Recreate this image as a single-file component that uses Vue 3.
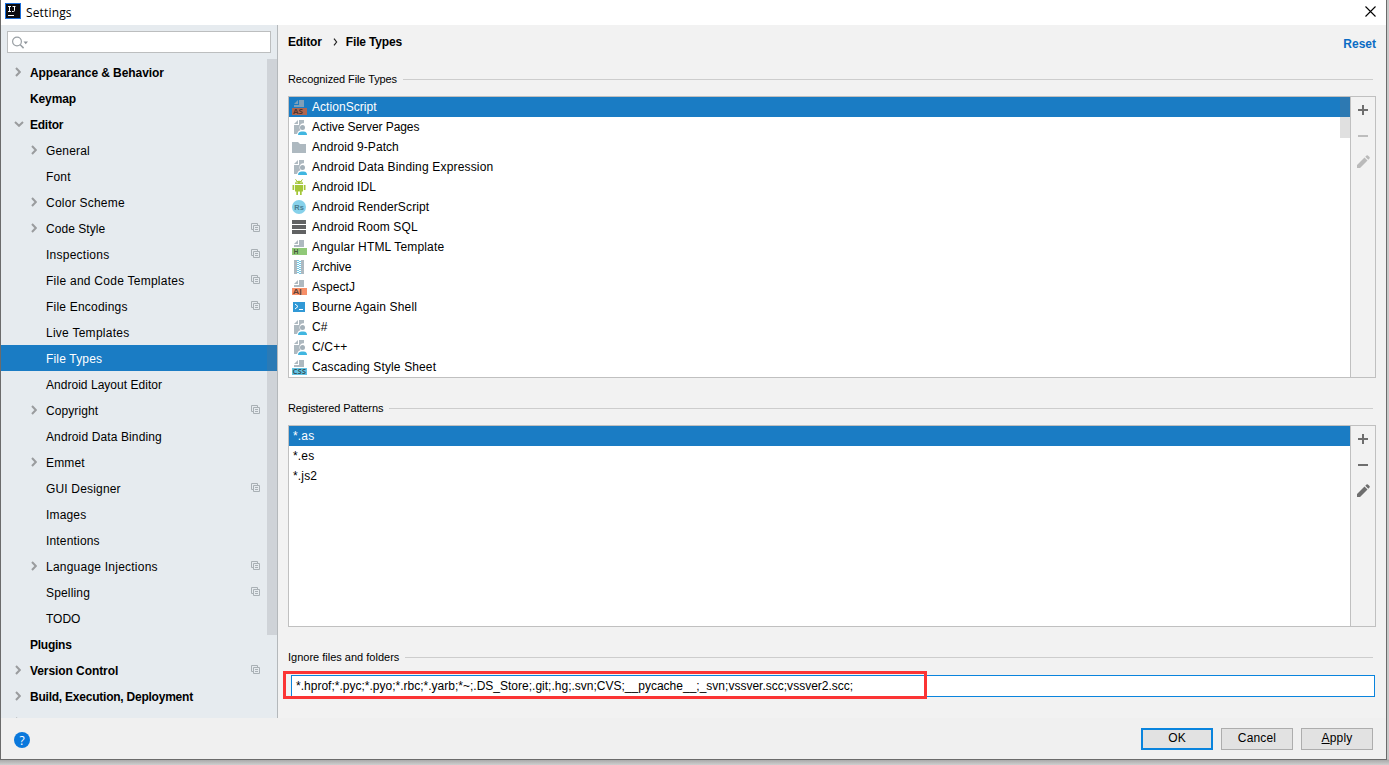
<template>
  <div class="screen">
    <div class="window">
      <header class="titlebar">
        <svg class="app-logo" width="16" height="16" viewBox="0 0 16 16">
          <rect width="16" height="16" fill="#1b6fdc" />
          <rect x="1" y="1" width="14" height="14" fill="#0c0c10" />
          <path d="M3 3.500h3M4.500 3.500v5M3 8.500h3M7.500 3.500h3M9.500 3.500v4q0 1-1 1h-1.500" fill="none" stroke="#fff" />
          <path d="M3 12.500h6" stroke="#fff" />
        </svg>
        <span class="window-title">Settings</span>
        <svg class="close" width="11" height="11" viewBox="0 0 11 11">
          <path d="M.5 .5l10 10M10.500 .5l-10 10" stroke="#000" stroke-width="1.100" />
        </svg>
      </header>

      <div class="body">
        <aside class="sidebar">
          <div class="search">
            <svg width="17" height="13" viewBox="0 0 17 13">
              <circle cx="5" cy="5.500" r="4.400" fill="none" stroke="#9aa0a5" stroke-width="1.200" />
              <path d="M8 8.500l3.600 3.600" stroke="#9aa0a5" stroke-width="1.500" />
              <path d="M11.500 5.500h4.500l-2.250 2.800z" fill="#8d9399" />
            </svg>
          </div>
          <div class="tree">
            <div
              v-for="node in tree"
              :key="node.label"
              class="node"
              :class="{ root: node.root, selected: node.selected }"
            >
              <span class="arrow">
                <svg v-if="node.arrow === 'right'" class="arrow-right" width="6" height="10" viewBox="0 0 6 10">
                  <path d="M1 1l3.800 4L1 9" fill="none" stroke="#9a9c9e" stroke-width="2" />
                </svg>
                <svg v-if="node.arrow === 'down'" width="10" height="6" viewBox="0 0 10 6">
                  <path d="M1 1l4 3.800L9 1" fill="none" stroke="#9a9c9e" stroke-width="2" />
                </svg>
              </span>
              <span class="node-label" :style="tracking(node)">{{ node.label }}</span>
              <svg v-if="node.project" class="project" width="9" height="9" viewBox="0 0 9 9">
                <path d="M2 6.500H.5v-6h6v1.500M2.500 2.500h6v6h-6zM4 4.500h3M4 6.500h3" fill="none" stroke="#a9b0b5" />
              </svg>
            </div>
            <div class="tree-thumb"></div>
          </div>
        </aside>

        <main class="content">
          <div class="crumbs">
            <span class="crumb">Editor</span>
            <svg width="5" height="8" viewBox="0 0 5 8">
              <path d="M1 .7L3.600 4 1 7.300" fill="none" stroke="#222" stroke-width="1.200" />
            </svg>
            <span class="crumb">File Types</span>
            <span class="reset">Reset</span>
          </div>

          <div class="group-title first"><span>Recognized File Types</span></div>
          <div class="panel types">
            <div class="list">
              <div
                v-for="(type, i) in types"
                :key="type.label"
                class="item"
                :class="{ selected: i === 0 }"
              >
                <svg class="type-icon" width="16" height="16" viewBox="0 0 16 16">
                  <g v-if="type.icon === 'badge'">
                    <path d="M7 1v4H3z" :fill="type.doc || '#aeb9c0'" />
                    <path d="M8 1h5v7H3V6h5z" :fill="type.doc || '#aeb9c0'" />
                    <rect x="1" y="9" width="15" height="7" :fill="type.color" />
                    <text
                      :x="type.x"
                      y="15"
                      :textLength="type.w"
                      lengthAdjust="spacingAndGlyphs"
                      class="badge-text"
                    >{{ type.badge }}</text>
                  </g>
                  <g v-else-if="type.icon === 'custom'">
                    <path d="M7 1v4H3z" fill="#aeb9c0" />
                    <path d="M8 1h5v3.200a4 4 0 0 0-4.500 4.300q0 1.500 1 2.500Q6.500 12 6 15H3V6h5z" fill="#aeb9c0" />
                    <circle cx="11.500" cy="8.500" r="2.500" fill="#a3b0b9" />
                    <path d="M7 16c0-2.800 2-3.500 3.500-3.500h2c1.500 0 3.500 .7 3.500 3.500z" fill="#40b6e0" />
                  </g>
                  <path v-else-if="type.icon === 'folder'" d="M1 3h6l2 2h6v9H1z" fill="#aeb9c0" />
                  <g v-else-if="type.icon === 'android'" fill="#a4c639">
                    <path d="M4 5c0-2 1.500-3.200 4-3.200S12 3 12 5zM4 6h8v6.500H4zM1.500 6h1.700v5H1.500zM12.800 6h1.700v5h-1.700zM5.300 12h1.700v4H5.300zM9 12h1.700v4H9z" />
                    <path d="M4.500 .3l1.500 2M11.500 .3l-1.500 2" stroke="#a4c639" />
                    <path d="M5.500 3.200h1v1h-1zM9.500 3.200h1v1h-1z" fill="#fff" />
                  </g>
                  <g v-else-if="type.icon === 'rs'">
                    <circle cx="8" cy="8" r="7" fill="#86d1ea" />
                    <text x="3.300" y="11" textLength="9.500" lengthAdjust="spacingAndGlyphs" class="rs-text">Rs</text>
                  </g>
                  <path v-else-if="type.icon === 'sql'" d="M1 1h14v4H1zM1 6h14v4H1zM1 11h14v4H1z" fill="#616263" />
                  <g v-else-if="type.icon === 'archive'">
                    <path d="M3 1h3v14H3zM10 1h3v14h-3z" fill="#aeb9c0" />
                    <path d="M7 1v14M9 2v14" stroke="#40b6e0" stroke-width="2" stroke-dasharray="1 1" opacity=".75" />
                  </g>
                  <g v-else>
                    <rect x="2" y="3" width="12" height="10" fill="#3199d6" />
                    <path d="M4 5l3 2.500L4 10M8 10.500h4" fill="none" stroke="#fff" />
                  </g>
                </svg>
                <span :style="tracking(type)">{{ type.label }}</span>
              </div>
              <div class="list-thumb"></div>
            </div>
            <div class="tools">
              <svg width="16" height="16" viewBox="0 0 16 16"><path d="M8 3v10M3 8h10" stroke="#6e6e6e" stroke-width="2" /></svg>
              <svg width="16" height="16" viewBox="0 0 16 16"><path d="M3 8h10" stroke="#bdbdbd" stroke-width="2" /></svg>
              <svg width="16" height="16" viewBox="0 0 16 16"><path :d="pencil" fill="#bababa" /></svg>
            </div>
          </div>

          <div class="group-title second"><span>Registered Patterns</span></div>
          <div class="panel patterns">
            <div class="list">
              <div
                v-for="(pattern, i) in patterns"
                :key="pattern"
                class="item pattern"
                :class="{ selected: i === 0 }"
              >{{ pattern }}</div>
            </div>
            <div class="tools">
              <svg width="16" height="16" viewBox="0 0 16 16"><path d="M8 3v10M3 8h10" stroke="#6e6e6e" stroke-width="2" /></svg>
              <svg width="16" height="16" viewBox="0 0 16 16"><path d="M3 8h10" stroke="#6e6e6e" stroke-width="2" /></svg>
              <svg width="16" height="16" viewBox="0 0 16 16"><path :d="pencil" fill="#6e6e6e" /></svg>
            </div>
          </div>

          <div class="group-title third"><span>Ignore files and folders</span></div>
          <div class="ignore">
            <span>{{ ignored }}</span>
            <div class="highlight"></div>
          </div>
        </main>
      </div>

      <footer class="footer">
        <svg class="help" width="16" height="16" viewBox="0 0 16 16">
          <circle cx="8" cy="8" r="8" fill="#0a78dc" />
          <text x="8" y="12.500" text-anchor="middle" class="help-text">?</text>
        </svg>
        <button class="btn primary">OK</button>
        <button class="btn">Cancel</button>
        <button class="btn"><u>A</u>pply</button>
      </footer>
    </div>
  </div>
</template>

<script setup>
const tree = [
  { label: 'Appearance & Behavior', root: true, arrow: 'right', spacing: -0.07 },
  { label: 'Keymap', root: true },
  { label: 'Editor', root: true, arrow: 'down', spacing: -0.25 },
  { label: 'General', arrow: 'right' },
  { label: 'Font' },
  { label: 'Color Scheme', arrow: 'right', spacing: 0.24 },
  { label: 'Code Style', arrow: 'right', project: true, spacing: 0.05 },
  { label: 'Inspections', project: true, spacing: 0.25 },
  { label: 'File and Code Templates', project: true, spacing: 0.26 },
  { label: 'File Encodings', project: true, spacing: 0.21 },
  { label: 'Live Templates', spacing: 0.26 },
  { label: 'File Types', selected: true },
  { label: 'Android Layout Editor', spacing: 0.03 },
  { label: 'Copyright', arrow: 'right', project: true, spacing: 0.08 },
  { label: 'Android Data Binding', spacing: 0.12 },
  { label: 'Emmet', arrow: 'right' },
  { label: 'GUI Designer', project: true },
  { label: 'Images' },
  { label: 'Intentions' },
  { label: 'Language Injections', arrow: 'right', project: true, spacing: 0.23 },
  { label: 'Spelling', project: true },
  { label: 'TODO', spacing: 0 },
  { label: 'Plugins', root: true, spacing: -0.25 },
  { label: 'Version Control', root: true, arrow: 'right', project: true, spacing: -0.08 },
  { label: 'Build, Execution, Deployment', root: true, arrow: 'right', spacing: -0.23 },
  { label: '', root: true, arrow: 'right' }
]

const types = [
  { label: 'ActionScript', icon: 'badge', badge: 'AS', color: '#b0654f', doc: '#7f9fb8', x: 2, w: 10, spacing: 0.05 },
  { label: 'Active Server Pages', icon: 'custom', spacing: -0.07 },
  { label: 'Android 9-Patch', icon: 'folder', spacing: 0.05 },
  { label: 'Android Data Binding Expression', icon: 'custom' },
  { label: 'Android IDL', icon: 'android', spacing: 0.05 },
  { label: 'Android RenderScript', icon: 'rs', spacing: 0.13 },
  { label: 'Android Room SQL', icon: 'sql', spacing: 0.1 },
  { label: 'Angular HTML Template', icon: 'badge', badge: 'H', color: '#90c978', x: 2.5, w: 5 },
  { label: 'Archive', icon: 'archive', spacing: -0.1 },
  { label: 'AspectJ', icon: 'badge', badge: 'AJ', color: '#f78f68', x: 2, w: 9, spacing: 0.05 },
  { label: 'Bourne Again Shell', icon: 'shell' },
  { label: 'C#', icon: 'custom' },
  { label: 'C/C++', icon: 'custom' },
  { label: 'Cascading Style Sheet', icon: 'badge', badge: 'CSS', color: '#62c3e4', x: 1.5, w: 13.5, spacing: 0.13 }
]

const patterns = ['*.as', '*.es', '*.js2']

const ignored = '*.hprof;*.pyc;*.pyo;*.rbc;*.yarb;*~;.DS_Store;.git;.hg;.svn;CVS;__pycache__;_svn;vssver.scc;vssver2.scc;'

const pencil = 'M2 11l7.500-7.500 3 3L5 14H2zM10.300 2.700l1.200-1.200q.7-.7 1.400 0l1.600 1.600q.7 .7 0 1.400l-1.200 1.200z'

function tracking(entry) {
  return entry.spacing === undefined ? null : { letterSpacing: entry.spacing + 'px' }
}
</script>

<style>
body {
  margin: 0;
  overflow: hidden;
}
</style>

<style scoped>
.screen {
  box-sizing: border-box;
  width: 1389px;
  height: 765px;
  padding-right: 2px;
  background: linear-gradient(#c8c8c8 0, #c8c8c8 759px, #aaa 760px, #cfcfcf 765px);
  font-family: "Liberation Sans", Arial, sans-serif;
  font-size: 12px;
  letter-spacing: 0.17px;
  color: #000;
}

.window {
  box-sizing: border-box;
  height: 760px;
  display: flex;
  flex-direction: column;
  border: 1px solid #6b6b6b;
  border-top: none;
  background: #f2f2f2;
}

.titlebar {
  display: flex;
  align-items: center;
  height: 25px;
  flex-shrink: 0;
  padding: 0 10px 0 4px;
  background: #fff;
}

.app-logo {
  margin-bottom: 3px;
}

.window-title {
  flex: 1;
  margin: 0 0 1px 5px;
  font-family: "Open Sans", sans-serif;
  font-size: 12px;
  letter-spacing: 0.15px;
}

.close {
  margin-bottom: 3px;
}

.body {
  display: flex;
  height: 693px;
}

.sidebar {
  box-sizing: border-box;
  width: 277px;
  flex-shrink: 0;
  display: flex;
  flex-direction: column;
  padding-top: 6px;
  border-right: 1px solid #b4b8bb;
  background: #e6ebef;
}

.search {
  box-sizing: border-box;
  display: flex;
  align-items: center;
  width: 264px;
  height: 22px;
  flex-shrink: 0;
  margin-left: 6px;
  padding-left: 4px;
  border: 1px solid #bcbebf;
  background: #fff;
}

.tree {
  position: relative;
  flex: 1;
  margin-top: 6px;
  overflow: hidden;
}

.node {
  display: flex;
  align-items: center;
  height: 26px;
  padding: 0 17px 0 29px;
}

.node.root {
  padding-left: 13px;
  font-weight: bold;
  letter-spacing: -0.12px;
}

.node.selected {
  background: #1a7cc4;
  color: #fff;
}

.arrow {
  display: flex;
  justify-content: center;
  flex-shrink: 0;
  width: 10px;
  margin-right: 6px;
}

.arrow-right {
  margin-right: 3px;
}

.node-label {
  flex: 1;
  padding-top: 1px;
  white-space: nowrap;
}

.project {
  margin-bottom: 1px;
}

.tree-thumb {
  position: absolute;
  top: 0;
  right: 0;
  width: 10px;
  height: 576px;
  background: rgba(115, 115, 125, 0.2);
}

.content {
  flex: 1;
  display: flex;
  flex-direction: column;
  padding: 0 10px;
}

.crumbs {
  display: flex;
  align-items: center;
  height: 34px;
  font-weight: bold;
  letter-spacing: 0;
}

.crumb {
  letter-spacing: -0.15px;
}

.crumbs svg {
  margin: 0 8px 0 11px;
}

.reset {
  margin: 3px 0 0 auto;
  color: #0b6cc4;
}

.group-title {
  display: flex;
  align-items: center;
  height: 14px;
  margin-right: 3px;
  font-size: 11px;
  letter-spacing: -0.1px;
}

.group-title::after {
  content: "";
  flex: 1;
  height: 1px;
  margin-left: 6px;
  background: #cdcdcd;
}

.first {
  margin-top: 13px;
}

.second {
  margin-top: 23px;
}

.third {
  margin-top: 23px;
  letter-spacing: 0;
}

.panel {
  box-sizing: border-box;
  display: flex;
  margin-top: 10px;
  border: 1px solid #c0c0c0;
}

.types {
  height: 282px;
}

.patterns {
  height: 202px;
}

.list {
  position: relative;
  flex: 1;
  background: #fff;
}

.item {
  display: flex;
  align-items: center;
  height: 20px;
  padding-left: 2px;
}

.item.pattern {
  padding-left: 4px;
}

.item.selected {
  background: #1a7cc4;
  color: #fff;
}

.type-icon {
  margin-right: 5px;
}

.badge-text {
  font-family: "Open Sans", sans-serif;
  font-size: 7px;
  font-weight: bold;
  letter-spacing: 0;
  fill: #231f20;
  fill-opacity: 0.7;
}

.rs-text {
  font-size: 8px;
  font-weight: bold;
  letter-spacing: 0;
  fill: #4a7c8f;
}

.list-thumb {
  position: absolute;
  top: 0;
  right: 0;
  width: 10px;
  height: 41px;
  background: rgba(115, 115, 115, 0.22);
}

.tools {
  width: 24px;
  display: flex;
  flex-direction: column;
  align-items: center;
  gap: 10px;
  padding-top: 5px;
  border-left: 1px solid #c0c0c0;
}

.ignore {
  position: relative;
  box-sizing: border-box;
  display: flex;
  align-items: center;
  height: 22px;
  margin: 11px 1px 0 3px;
  padding-left: 4px;
  border: 1px solid #0a84dd;
  background: #fff;
  letter-spacing: 0.006px;
}

.highlight {
  position: absolute;
  box-sizing: border-box;
  left: -9px;
  top: -5px;
  width: 644px;
  height: 28px;
  border: 3px solid #fb3434;
}

.footer {
  flex: 1;
  display: flex;
  align-items: flex-start;
  gap: 8px;
  padding: 10px 13px 0 13px;
  background: #f0f0f0;
}

.help {
  margin: 4px auto 0 0;
}

.help-text {
  font-family: "Open Sans", sans-serif;
  font-size: 12px;
  letter-spacing: 0;
  fill: #fff;
}

.btn {
  box-sizing: border-box;
  width: 72px;
  height: 22px;
  padding: 0 0 2px;
  border: 1px solid #adadad;
  background: #e2e2e2;
  font: inherit;
  letter-spacing: inherit;
  color: #000;
}

.btn.primary {
  border: 2px solid #0a84dd;
}
</style>
